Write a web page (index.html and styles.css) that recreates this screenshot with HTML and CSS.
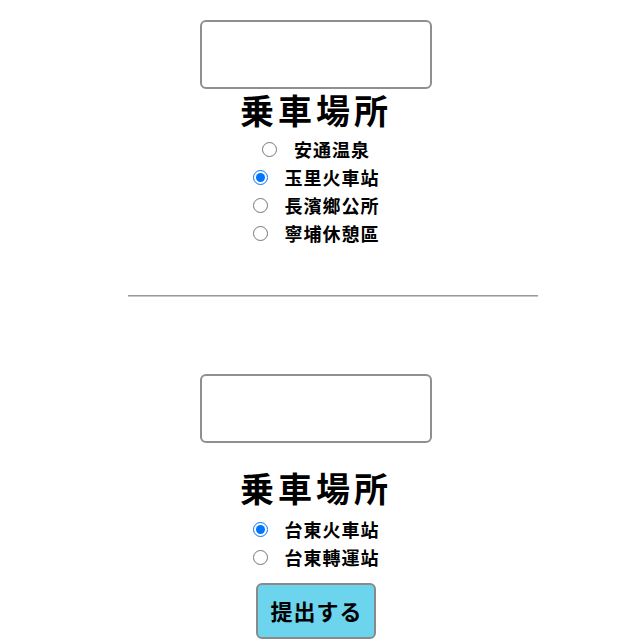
FILE: index.html
```html
<!DOCTYPE html>
<html lang="ja">
<head>
<meta charset="utf-8">
<link rel="stylesheet" href="styles.css">
</head>
<body>
<main class="page">
  <section class="block">
    <div class="box"></div>
    <h2 class="title">乗車場所</h2>
    <div class="options">
      <label class="opt"><input type="radio" name="p1"><span>安通温泉</span></label>
      <label class="opt"><input type="radio" name="p1" checked><span>玉里火車站</span></label>
      <label class="opt"><input type="radio" name="p1"><span>長濱鄉公所</span></label>
      <label class="opt"><input type="radio" name="p1"><span>寧埔休憩區</span></label>
    </div>
  </section>
  <hr class="rule">
  <section class="block second">
    <div class="box"></div>
    <h2 class="title title-spaced">乗車場所</h2>
    <div class="options options-spaced">
      <label class="opt"><input type="radio" name="p2" checked><span>台東火車站</span></label>
      <label class="opt"><input type="radio" name="p2"><span>台東轉運站</span></label>
    </div>
    <button class="submit" type="button">提出する</button>
  </section>
</main>
</body>
</html>
```
FILE: styles.css
```css
html, body {
  margin: 0;
  padding: 0;
  background: #fff;
}
body {
  font-family: "Noto Sans CJK TC", "Noto Sans CJK JP", "Noto Sans", sans-serif;
  color: #000;
}
.page {
  display: flex;
  flex-direction: column;
  align-items: center;
  padding: 20px 8px 0 0;
}
.block {
  display: flex;
  flex-direction: column;
  align-items: center;
}
.box {
  width: 228px;
  height: 65px;
  border: 2px solid #8f8f8f;
  border-radius: 6px;
}
.title {
  margin: 1px 0 0;
  font-size: 34px;
  line-height: 40px;
  font-weight: 700;
  letter-spacing: 4px;
}
.title-spaced {
  margin-top: 25px;
}
.options {
  display: flex;
  flex-direction: column;
  align-items: center;
  margin-top: 5px;
}
.options-spaced {
  margin-top: 7px;
}
.opt {
  display: flex;
  align-items: center;
  height: 28px;
  font-size: 18px;
  font-weight: 700;
  letter-spacing: 1px;
}
.opt input {
  margin: 0 17px 0 0;
  width: 15px;
  height: 15px;
}
.rule {
  width: 410px;
  margin: 48px 0 0 34px;
  border: none;
  border-top: 1px solid #9a9a9a;
  border-bottom: 1px solid #c8c8c8;
  height: 0;
}
.second {
  margin-top: 77px;
}
.submit {
  margin-top: 12px;
  width: 120px;
  height: 56px;
  background: #6dd4ee;
  border: 2px solid #8a8a8a;
  border-radius: 6px;
  font-family: inherit;
  font-size: 22px;
  font-weight: 700;
  letter-spacing: 1px;
  color: #000;
  padding: 0 0 3px 1px;
}
```
